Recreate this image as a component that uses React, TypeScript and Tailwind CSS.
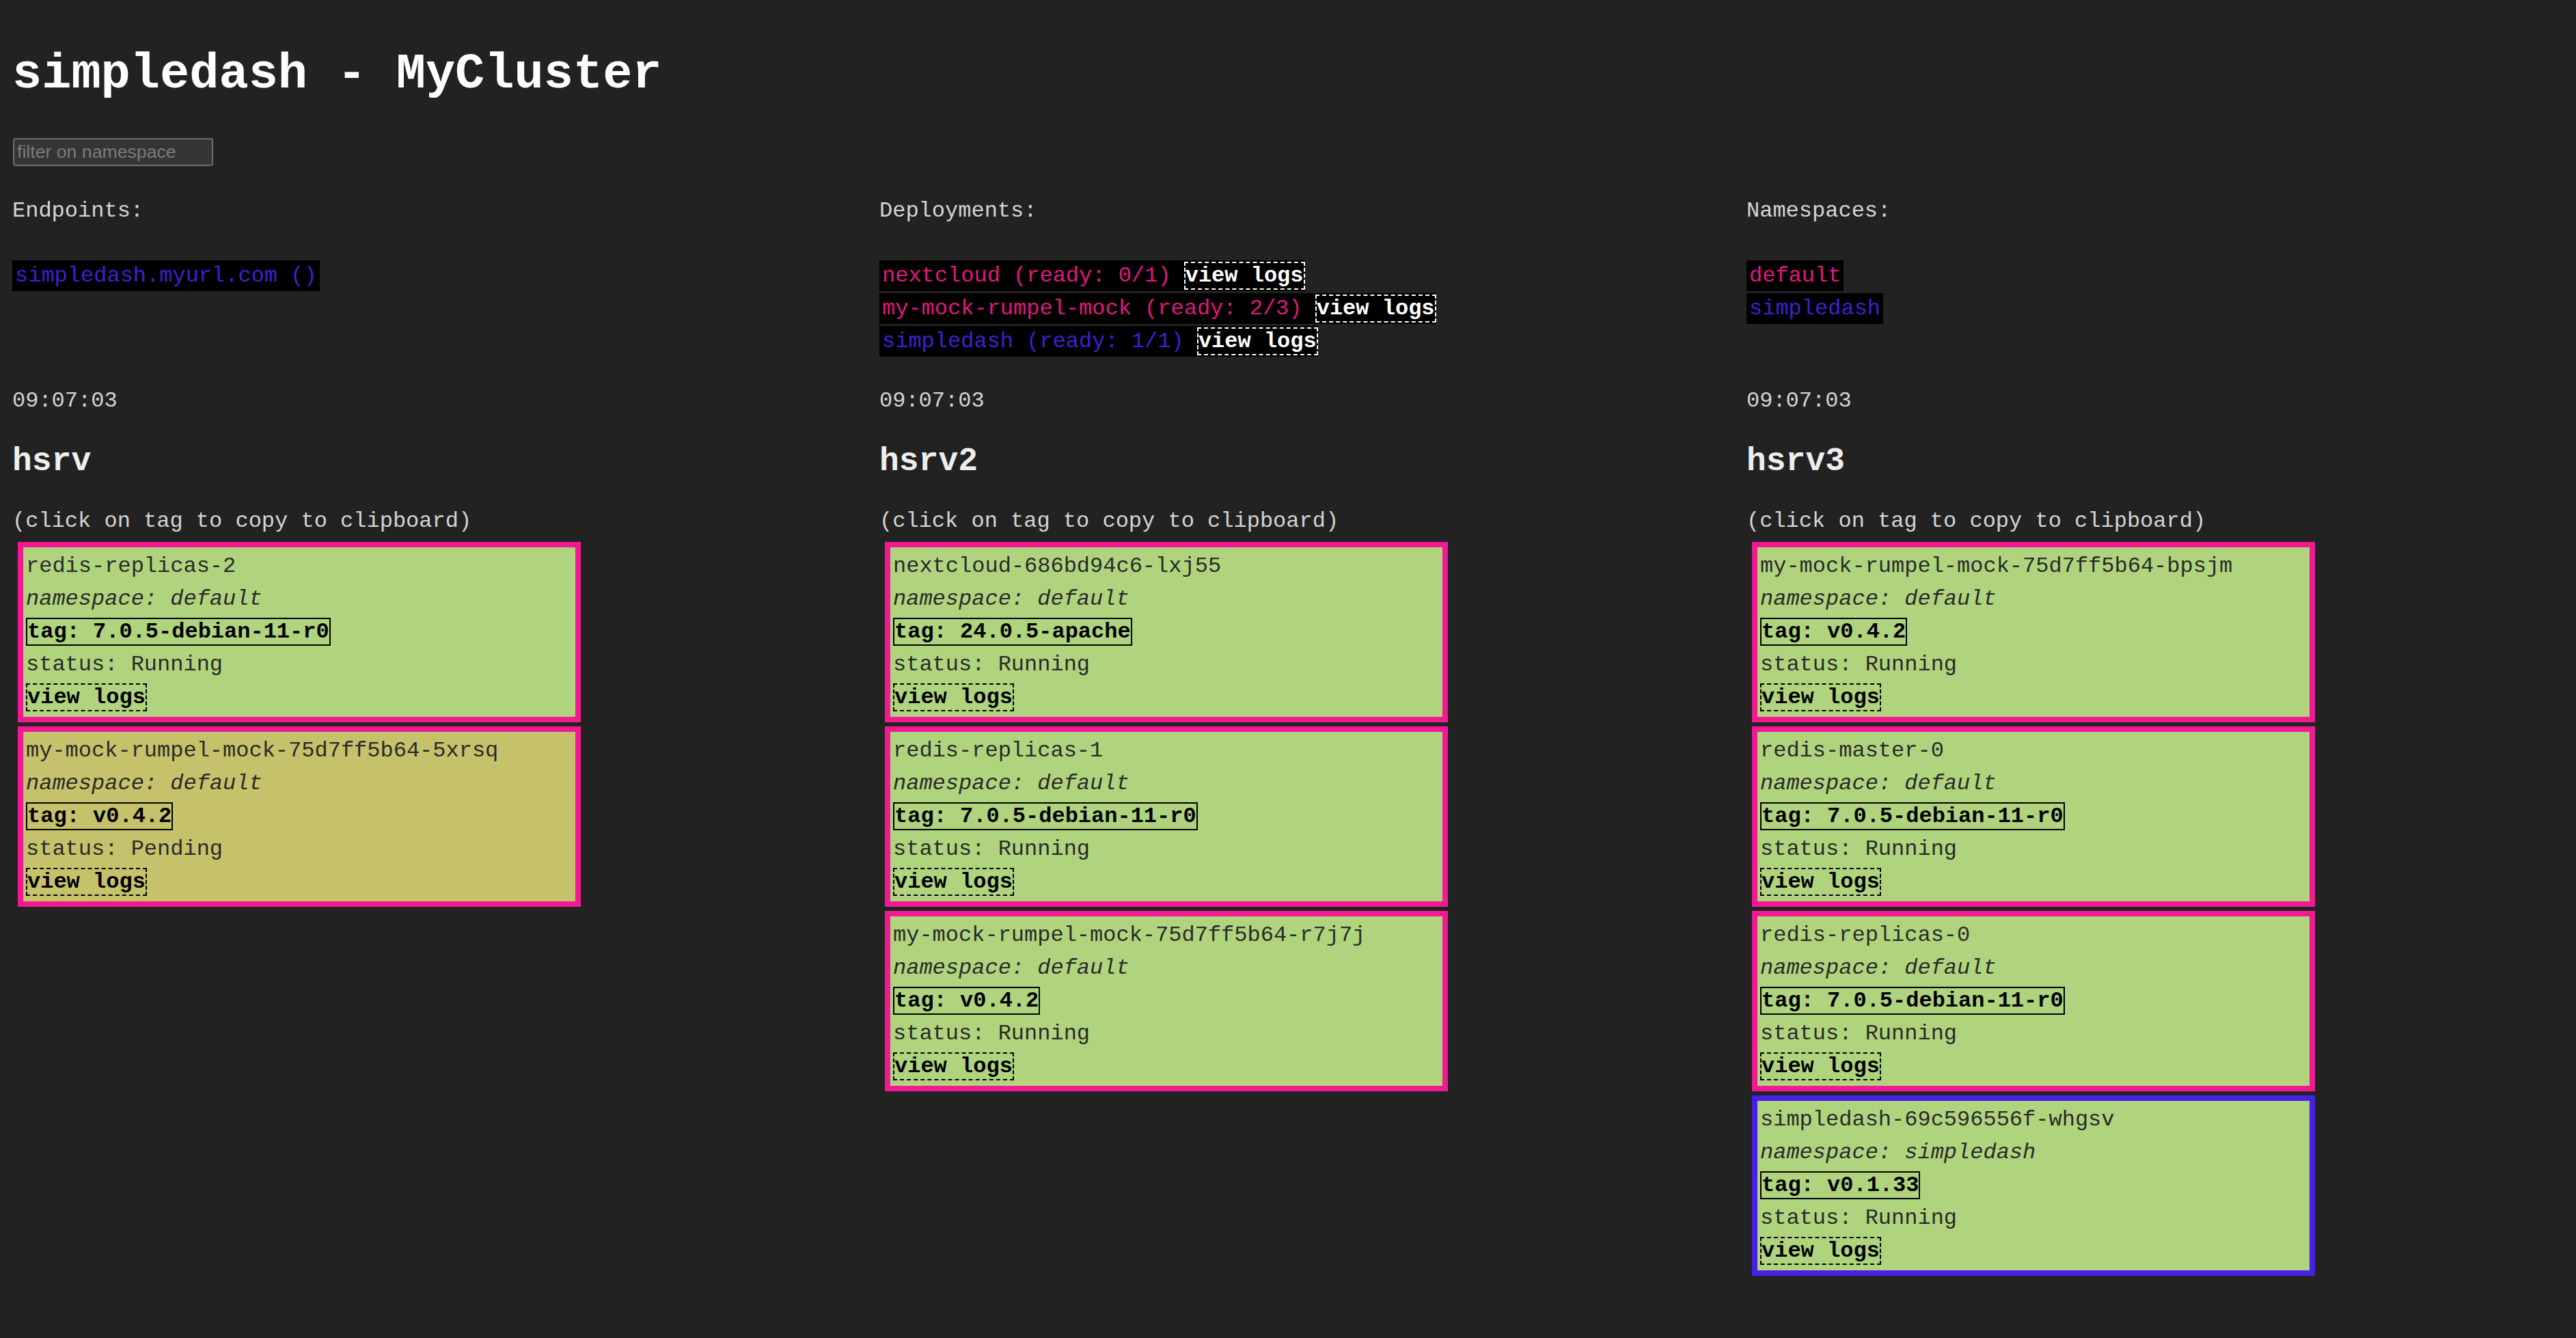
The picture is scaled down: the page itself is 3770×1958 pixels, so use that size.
// @ts-nocheck
import React from 'react'

const endpoints = [{ text: 'simpledash.myurl.com ()', ns: 'simpledash' }]

const deployments = [
  { name: 'nextcloud', ready: '0/1', ns: 'default' },
  { name: 'my-mock-rumpel-mock', ready: '2/3', ns: 'default' },
  { name: 'simpledash', ready: '1/1', ns: 'simpledash' },
]

const namespaces = ['default', 'simpledash']

const hosts = [
  {
    name: 'hsrv',
    pods: [
      { name: 'redis-replicas-2', ns: 'default', tag: '7.0.5-debian-11-r0', status: 'Running' },
      { name: 'my-mock-rumpel-mock-75d7ff5b64-5xrsq', ns: 'default', tag: 'v0.4.2', status: 'Pending' },
    ],
  },
  {
    name: 'hsrv2',
    pods: [
      { name: 'nextcloud-686bd94c6-lxj55', ns: 'default', tag: '24.0.5-apache', status: 'Running' },
      { name: 'redis-replicas-1', ns: 'default', tag: '7.0.5-debian-11-r0', status: 'Running' },
      { name: 'my-mock-rumpel-mock-75d7ff5b64-r7j7j', ns: 'default', tag: 'v0.4.2', status: 'Running' },
    ],
  },
  {
    name: 'hsrv3',
    pods: [
      { name: 'my-mock-rumpel-mock-75d7ff5b64-bpsjm', ns: 'default', tag: 'v0.4.2', status: 'Running' },
      { name: 'redis-master-0', ns: 'default', tag: '7.0.5-debian-11-r0', status: 'Running' },
      { name: 'redis-replicas-0', ns: 'default', tag: '7.0.5-debian-11-r0', status: 'Running' },
      { name: 'simpledash-69c596556f-whgsv', ns: 'simpledash', tag: 'v0.1.33', status: 'Running' },
    ],
  },
]

// namespace -> text colour
const nsText = (ns) => (ns === 'simpledash' ? 'text-[#3d20d2]' : 'text-[#e0177f]')

function Box({ children }) {
  return <div className="w-fit bg-black px-[4px] py-[4px] leading-[37px]">{children}</div>
}

function PodCard({ pod }) {
  const border = pod.ns === 'simpledash' ? 'border-[#4620e6]' : 'border-[#f21a93]'
  const bg = pod.status === 'Pending' ? 'bg-[#c6c26b]' : 'bg-[#b0d47e]'
  return (
    <div className={`ml-[8px] mt-[6px] w-[824px] border-[8px] ${border} ${bg} p-[4px] leading-[48px] text-[#2a2a2a]`}>
      <div>{pod.name}</div>
      <div className="italic">namespace: {pod.ns}</div>
      <div>
        <span className="cursor-pointer border-2 border-solid border-black font-bold text-black">tag: {pod.tag}</span>
      </div>
      <div>status: {pod.status}</div>
      <div>
        <span className="cursor-pointer border-2 border-dashed border-black font-bold text-black">view logs</span>
      </div>
    </div>
  )
}

export default function App() {
  return (
    <div className="min-h-screen bg-[#222222] pl-[18px] font-['Liberation_Mono','Courier_New',monospace] text-[32px] text-[#d4d4d4]">
      <h1 className="pt-[68px] text-[72px] font-bold leading-[82px] text-white">simpledash - MyCluster</h1>

      <input
        placeholder="filter on namespace"
        className="ml-[1px] mt-[52px] block h-[41px] w-[293px] rounded-[4px] border-2 border-[#6e6e6e] bg-[#353535] px-[4px] font-['Liberation_Sans',Arial,sans-serif] text-[26.67px] text-white outline-none placeholder:text-[#7b7b7b]"
      />

      <div className="grid grid-cols-[1269px_1269px_1fr]">
        {/* top row */}
        <div className="mt-[42px]">
          <div className="leading-[48px]">Endpoints:</div>
          <div className="mt-[48px] flex flex-col items-start gap-[3px]">
            {endpoints.map((e) => (
              <Box key={e.text}>
                <span className={nsText(e.ns)}>{e.text}</span>
              </Box>
            ))}
          </div>
        </div>
        <div className="mt-[42px]">
          <div className="leading-[48px]">Deployments:</div>
          <div className="mt-[48px] flex flex-col items-start gap-[3px] pb-[3px]">
            {deployments.map((d) => (
              <div key={d.name} className="w-fit bg-black py-[4px] pl-[4px] leading-[37px]">
                <span className={nsText(d.ns)}>
                  {d.name} (ready: {d.ready})
                </span>{' '}
                <span className="cursor-pointer border-2 border-dashed border-white font-bold text-white">view logs</span>
              </div>
            ))}
          </div>
        </div>
        <div className="mt-[42px]">
          <div className="leading-[48px]">Namespaces:</div>
          <div className="mt-[48px] flex flex-col items-start gap-[3px]">
            {namespaces.map((n) => (
              <Box key={n}>
                <span className={nsText(n)}>{n}</span>
              </Box>
            ))}
          </div>
        </div>

        {/* hosts */}
        {hosts.map((h) => (
          <div key={h.name} className="pb-[40px]">
            <div className="mt-[38px] leading-[48px]">09:07:03</div>
            <h2 className="mt-[37px] text-[48px] font-bold leading-[54px] text-[#eeeeee]">{h.name}</h2>
            <div className="mt-[37px] leading-[48px]">(click on tag to copy to clipboard)</div>
            {h.pods.map((p) => (
              <PodCard key={p.name} pod={p} />
            ))}
          </div>
        ))}
      </div>
    </div>
  )
}
